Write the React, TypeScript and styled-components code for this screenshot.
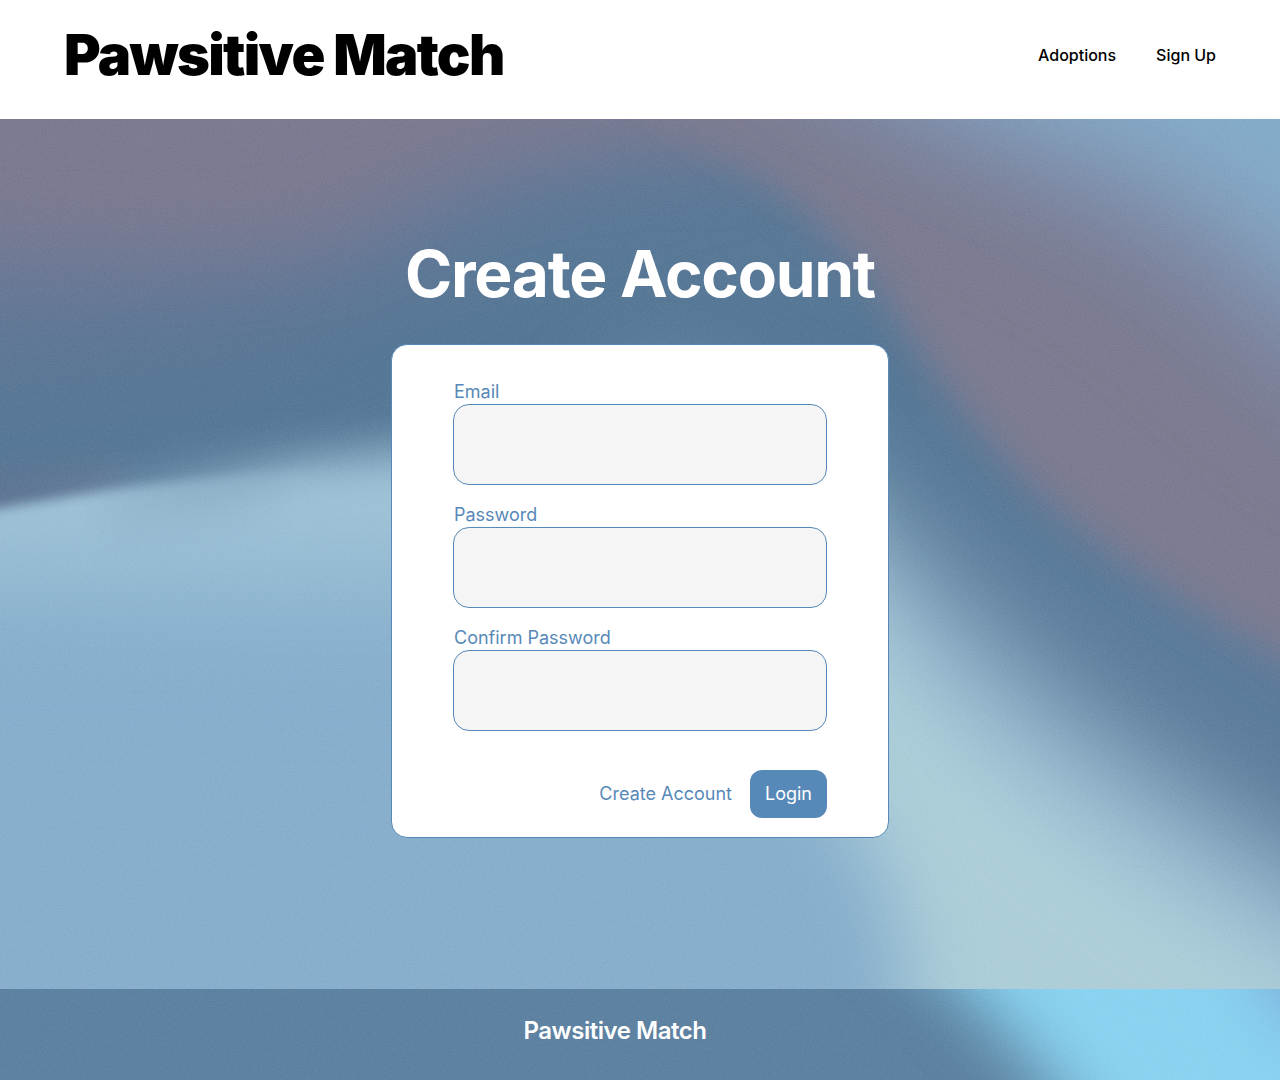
import React from "react";
import styled, { createGlobalStyle } from "styled-components";

const GlobalStyle = createGlobalStyle`
  *, *::before, *::after { box-sizing: border-box; }
  body {
    margin: 0;
    background: #fff;
    font-family: Inter, "Noto Sans", sans-serif;
    -webkit-font-smoothing: antialiased;
  }
`;

const blue = "#5789b8";

const Page = styled.div`
  display: flex;
  flex-direction: column;
  min-height: 100vh;
`;

const Header = styled.header`
  display: flex;
  align-items: center;
  justify-content: space-between;
  gap: 40px;
  padding: 20px 64px 29px;
  background: #fff;
`;

const Brand = styled.a`
  color: #000;
  font-size: 56px;
  font-weight: 900;
  line-height: 70px;
  letter-spacing: -0.03em;
  text-decoration: none;
`;

const Nav = styled.nav`
  display: flex;
  gap: 40px;
`;

const NavLink = styled.a`
  color: #000;
  font-size: 16px;
  font-weight: 500;
  line-height: 24px;
  text-decoration: none;
`;

const Hero = styled.main`
  position: relative;
  isolation: isolate;
  overflow: hidden;
  flex: 1;
  display: flex;
  flex-direction: column;
  align-items: center;
  gap: 31px;
  padding: 116px 24px 151px;
  background: #587896;
`;

const Artwork = styled.svg`
  position: absolute;
  inset: 0;
  z-index: -1;
  width: 100%;
  height: 100%;
`;

const Title = styled.h1`
  margin: 0;
  color: #fff;
  font-size: 64px;
  font-weight: 700;
  line-height: 78px;
  letter-spacing: -0.02em;
  text-align: center;
`;

const Card = styled.form`
  display: flex;
  flex-direction: column;
  gap: 18px;
  width: 100%;
  max-width: 498px;
  padding: 35px 61px 19px;
  border: 1px solid ${blue};
  border-radius: 16px;
  background: #fff;
`;

const FieldGroup = styled.div`
  display: flex;
  flex-direction: column;
`;

const Label = styled.label`
  padding-left: 1px;
  color: ${blue};
  font-size: 18px;
  line-height: 24px;
`;

const Input = styled.input`
  width: 100%;
  height: 81px;
  padding: 0 20px;
  border: 1px solid ${blue};
  border-radius: 16px;
  background: #f5f5f5;
  color: #1e1e1e;
  font: inherit;
  font-size: 18px;
`;

const Actions = styled.div`
  display: flex;
  align-items: center;
  justify-content: flex-end;
  gap: 18px;
  padding-top: 21px;
`;

const TextLink = styled.a`
  color: ${blue};
  font-size: 18px;
  line-height: 24px;
  text-decoration: none;
`;

const Button = styled.button`
  height: 48px;
  padding: 0 15px;
  border: 0;
  border-radius: 12px;
  background: ${blue};
  color: #fff;
  font: inherit;
  font-size: 18px;
  line-height: 24px;
  cursor: pointer;
`;

const Footer = styled.footer`
  position: relative;
  isolation: isolate;
  overflow: hidden;
  display: flex;
  justify-content: center;
  padding: 26px 50px 33px 0;
  background: #5d81a0;
`;

const FooterBrand = styled.span`
  color: #fff;
  font-size: 24px;
  font-weight: 600;
  line-height: 32px;
  letter-spacing: -0.02em;
`;

function Blur({ id, amount }: { id: string; amount: number }) {
  return (
    <filter id={id} filterUnits="userSpaceOnUse" x="-300" y="-200" width="1900" height="1600" colorInterpolationFilters="sRGB">
      <feGaussianBlur stdDeviation={amount} />
    </filter>
  );
}

function Grain({ id }: { id: string }) {
  return (
    <filter id={id} x="0" y="0" width="100%" height="100%" colorInterpolationFilters="sRGB">
      <feTurbulence type="fractalNoise" baseFrequency="0.7" numOctaves={2} seed={4} />
      <feColorMatrix values="1 0 0 0 0  1 0 0 0 0  1 0 0 0 0  0 0 0 0 1" />
    </filter>
  );
}

function HeroArtwork() {
  return (
    <Artwork viewBox="0 119 1280 870" preserveAspectRatio="none" aria-hidden="true">
      <defs>
        <Blur id="b8" amount={6} />
        <Blur id="b16" amount={18} />
        <Blur id="b24" amount={24} />
        <Blur id="b36" amount={36} />
        <Blur id="b50" amount={52} />
        <Grain id="heroGrain" />
        <linearGradient id="steel" gradientUnits="userSpaceOnUse" x1="0" y1="119" x2="0" y2="620">
          <stop offset="0" stopColor="#5e7b9a" />
          <stop offset="0.45" stopColor="#567896" />
          <stop offset="1" stopColor="#5c7c9b" />
        </linearGradient>
        <linearGradient id="sea" gradientUnits="userSpaceOnUse" x1="0" y1="480" x2="0" y2="989">
          <stop offset="0" stopColor="#a1c3d7" />
          <stop offset="0.1" stopColor="#9cc0d5" />
          <stop offset="0.3" stopColor="#8cb3cf" />
          <stop offset="0.5" stopColor="#87aecc" />
          <stop offset="1" stopColor="#88b0cc" />
        </linearGradient>
        <linearGradient id="toRight" gradientUnits="userSpaceOnUse" x1="0" y1="0" x2="300" y2="0">
          <stop offset="0" stopColor="#000" />
          <stop offset="1" stopColor="#fff" />
        </linearGradient>
        <linearGradient id="toLeft" gradientUnits="userSpaceOnUse" x1="80" y1="0" x2="380" y2="0">
          <stop offset="0" stopColor="#fff" />
          <stop offset="1" stopColor="#000" />
        </linearGradient>
        <mask id="softSide" maskUnits="userSpaceOnUse" x="0" y="119" width="1280" height="870">
          <rect x="0" y="119" width="1280" height="870" fill="url(#toRight)" />
        </mask>
        <mask id="sharpSide" maskUnits="userSpaceOnUse" x="0" y="119" width="1280" height="870">
          <rect x="0" y="119" width="1280" height="870" fill="url(#toLeft)" />
        </mask>
      </defs>

      <rect x="0" y="119" width="1280" height="870" fill="url(#steel)" />

      {/* mauve haze along the upper left */}
      <path d="M-300 -100H760V115C640 125 540 175 420 255C320 325 130 360 -300 360Z" fill="#687997" filter="url(#b50)" />
      <path d="M-300 -100H760V148C620 135 480 160 390 210C300 265 150 260 -300 235Z" fill="#7c7b92" filter="url(#b36)" />

      {/* mauve ridge running down the right side */}
      <path d="M620 -100V105C740 155 820 215 875 285C930 370 970 435 1060 515C1140 580 1220 625 1290 665L1600 815V-100Z" fill="#7c7c92" filter="url(#b16)" />
      <path d="M600 -80C760 90 940 165 1060 215C1170 275 1240 340 1340 430L1700 500V-200H600Z" fill="#7e88a4" filter="url(#b50)" />
      <path d="M740 -50C890 85 1030 125 1140 170C1215 210 1265 250 1340 320L1700 400V-200H740Z" fill="#85acc9" filter="url(#b50)" />

      {/* pale shape rising from the lower left */}
      <path d="M-80 478L0 482L60 476L120 470V496L0 514L-80 520Z" fill="#647593" filter="url(#b16)" />
      <path d="M-300 570L0 555L200 525L400 505L640 500V1300H-300Z" fill="url(#sea)" filter="url(#b16)" />
      <g mask="url(#sharpSide)">
        <path d="M-300 560L0 508L130 487L260 472L400 462V1300H-300Z" fill="url(#sea)" filter="url(#b8)" />
      </g>
      <g mask="url(#softSide)">
        <path d="M-600 600L0 512L130 488L260 468L400 450L640 430L850 500V1300H-600Z" fill="url(#sea)" filter="url(#b24)" />
      </g>

      {/* pale band sweeping to the lower right */}
      <path d="M640 380L830 470C920 570 980 640 1070 710C1150 770 1220 820 1500 990V1400H640Z" fill="#9cbcd1" filter="url(#b50)" />
      <path d="M760 510L850 600C900 690 990 770 1080 835C1160 895 1240 945 1500 1075V1400H760Z" fill="#adced9" filter="url(#b36)" />

      {/* mid-blue pool under the card */}
      <path d="M-200 680H640C800 690 840 810 880 870C900 920 915 960 925 1300H-200Z" fill="#88afcc" filter="url(#b36)" />

      <rect x="0" y="119" width="1280" height="870" filter="url(#heroGrain)" opacity="0.14" style={{ mixBlendMode: "soft-light" }} />
    </Artwork>
  );
}

function FooterArtwork() {
  return (
    <Artwork viewBox="0 989 1280 91" preserveAspectRatio="none" aria-hidden="true">
      <defs>
        <filter id="glow" filterUnits="userSpaceOnUse" x="700" y="700" width="1000" height="700" colorInterpolationFilters="sRGB">
          <feGaussianBlur stdDeviation={34} />
        </filter>
        <Grain id="footGrain" />
      </defs>
      <rect x="0" y="989" width="1280" height="91" fill="#5e82a1" />
      <path d="M800 850L965 989L1048 1080L1180 1250H1700V850Z" fill="#8ad3f0" filter="url(#glow)" />
      <path d="M1210 850L1275 1005L1420 1100V850Z" fill="#7cacd8" filter="url(#glow)" />
      <rect x="0" y="989" width="1280" height="91" filter="url(#footGrain)" opacity="0.14" style={{ mixBlendMode: "soft-light" }} />
    </Artwork>
  );
}

function Field({ id, label, type }: { id: string; label: string; type: string }) {
  return (
    <FieldGroup>
      <Label htmlFor={id}>{label}</Label>
      <Input id={id} name={id} type={type} />
    </FieldGroup>
  );
}

export default function App() {
  return (
    <Page>
      <GlobalStyle />
      <Header>
        <Brand href="#">Pawsitive Match</Brand>
        <Nav>
          <NavLink href="#adoptions">Adoptions</NavLink>
          <NavLink href="#signup">Sign Up</NavLink>
        </Nav>
      </Header>
      <Hero>
        <HeroArtwork />
        <Title>Create Account</Title>
        <Card onSubmit={(e: React.FormEvent) => e.preventDefault()}>
          <Field id="email" label="Email" type="email" />
          <Field id="password" label="Password" type="password" />
          <Field id="confirm" label="Confirm Password" type="password" />
          <Actions>
            <TextLink href="#create">Create Account</TextLink>
            <Button type="submit">Login</Button>
          </Actions>
        </Card>
      </Hero>
      <Footer>
        <FooterArtwork />
        <FooterBrand>Pawsitive Match</FooterBrand>
      </Footer>
    </Page>
  );
}
